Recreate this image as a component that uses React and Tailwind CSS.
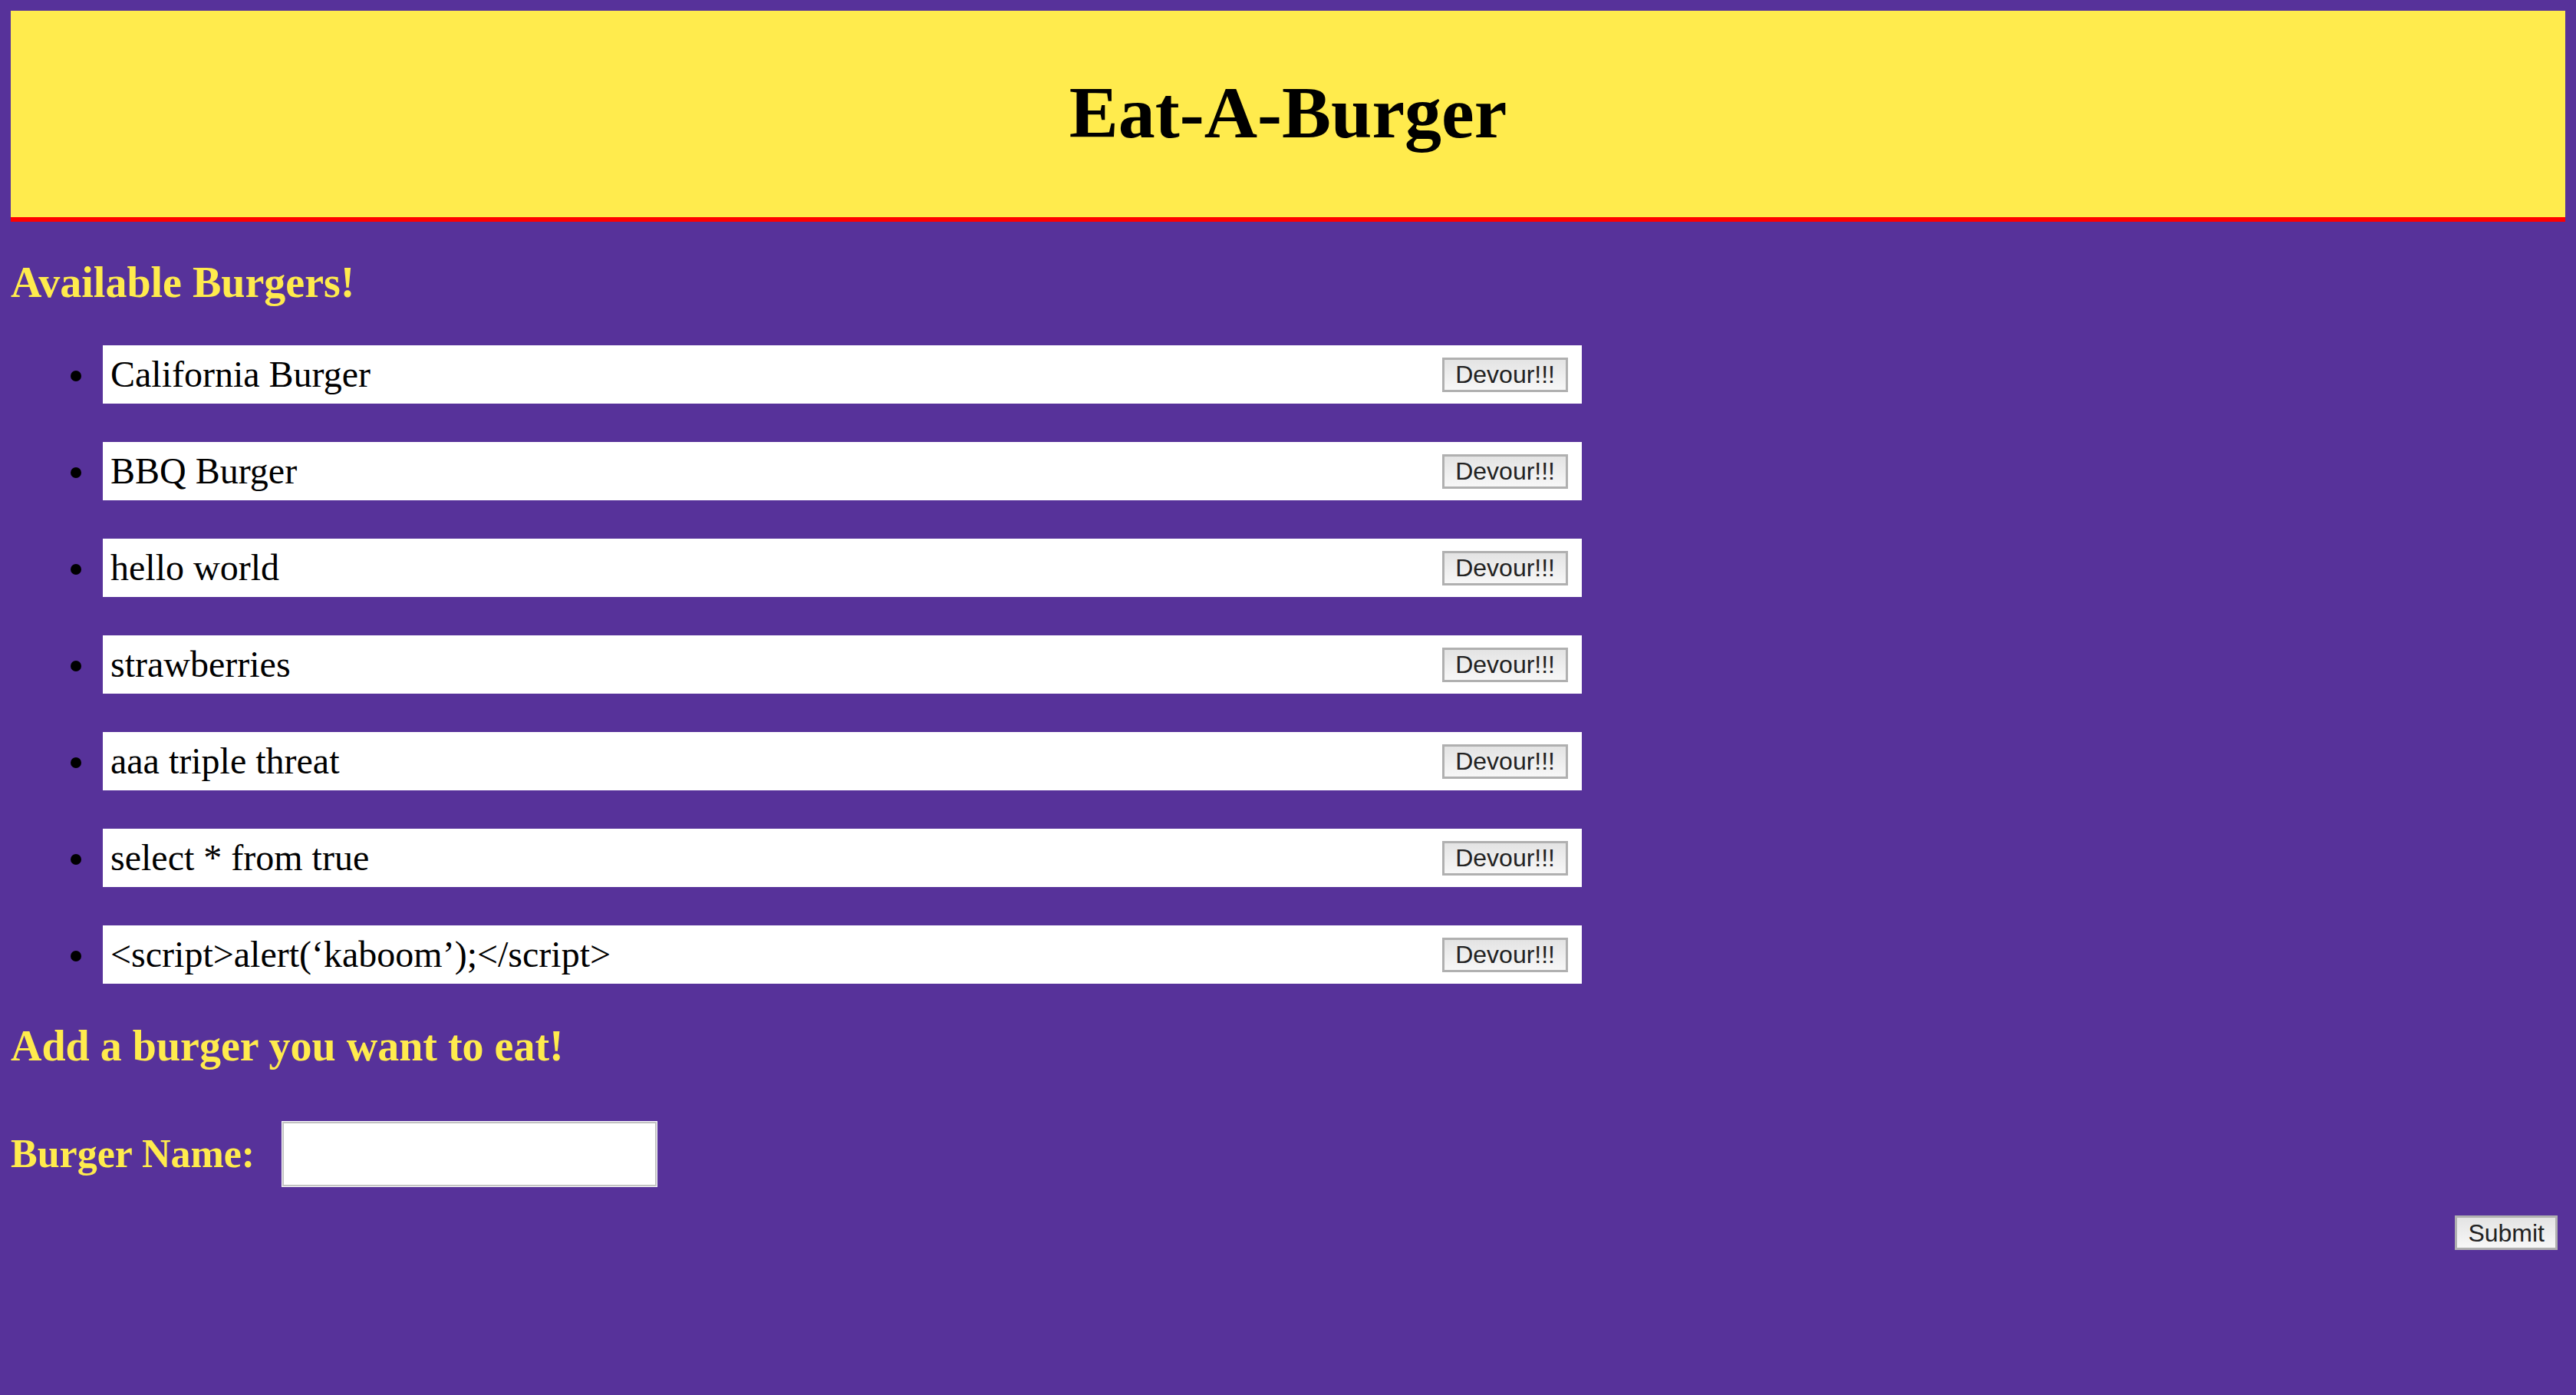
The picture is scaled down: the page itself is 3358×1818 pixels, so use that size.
import React from 'react';

const burgers = [
  'California Burger',
  'BBQ Burger',
  'hello world',
  'strawberries',
  'aaa triple threat',
  'select * from true',
  "<script>alert(\u2018kaboom\u2019);</script>",
];

const serif = "font-['Liberation_Serif','Times_New_Roman',serif]";
const sans = "font-['Liberation_Sans',Arial,sans-serif]";

const GrayButton = ({ children }) => (
  <button
    type="button"
    className={`${sans} h-[45px] px-[14px] text-[32px] leading-none text-[#222] border-[3px] border-[#b0b0b0] bg-gradient-to-b from-[#e4e4e4] to-[#f7f7f7]`}
  >
    {children}
  </button>
);

const BurgerRow = ({ name }) => (
  <li className="flex items-center">
    <span className="ml-[78px] w-[14px] h-[14px] rounded-full bg-black mt-[4px]" />
    <div className="ml-[28px] w-[1928px] h-[76px] bg-white flex items-center justify-between pl-[10px] pr-[18px]">
      <span className={`${serif} text-[48px] leading-[76px] text-black`}>{name}</span>
      <GrayButton>Devour!!!</GrayButton>
    </div>
  </li>
);

export default function App() {
  return (
    <div className={`min-h-screen bg-[#57329a] p-[14px] ${serif}`}>
      <header className="h-[275px] bg-[#ffeb4d] border-b-[6px] border-[#ff0000] flex items-center justify-center pb-[4px]">
        <h1 className={`${serif} text-[96px] leading-none font-bold text-black`}>Eat-A-Burger</h1>
      </header>

      <h2 className="mt-[51px] text-[56px] leading-[56px] font-bold text-[#ffeb4d]">Available Burgers!</h2>

      <ul className="mt-[54px] flex flex-col gap-[50px]">
        {burgers.map((b) => (
          <BurgerRow key={b} name={b} />
        ))}
      </ul>

      <h2 className="mt-[53px] text-[56px] leading-[56px] font-bold text-[#ffeb4d]">Add a burger you want to eat!</h2>

      <form className="mt-[71px]" onSubmit={(e) => e.preventDefault()}>
        <div className="flex items-center gap-[36px]">
          <label className="text-[52px] leading-[52px] font-bold text-[#ffeb4d]">Burger Name:</label>
          <input
            type="text"
            className="w-[488px] h-[84px] bg-white border-2 border-[#c2c2c2] ring-1 ring-white outline-none"
          />
        </div>
        <div className="mt-[38px] flex justify-end pr-[10px]">
          <GrayButton>Submit</GrayButton>
        </div>
      </form>
    </div>
  );
}
